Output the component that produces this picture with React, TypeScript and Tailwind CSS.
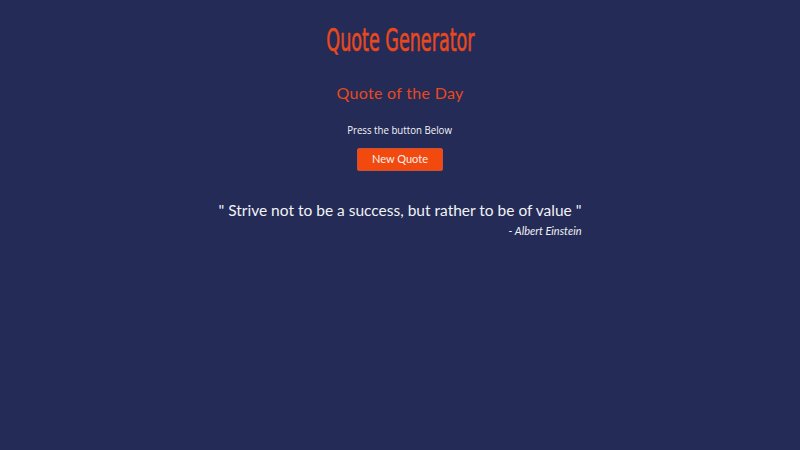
export default function App() {
  return (
    <div className="min-h-[450px] w-full bg-[#232b56] flex flex-col items-center pt-[20px] font-['Lato',sans-serif]">
      <h1 className="text-[#e8491d] text-[32px] leading-[40px] font-['DejaVu_Sans_Condensed','DejaVu_Sans',sans-serif] scale-x-[0.61] [-webkit-text-stroke:0.6px_#e8491d]">
        Quote Generator
      </h1>
      <h2 className="mt-[22px] text-[#e8491d] text-[16px] leading-[22px] tracking-[0.3px]">
        Quote of the Day
      </h2>
      <p className="mt-[18px] text-[#f4f4f8] text-[11px] leading-[16px] font-['Open_Sans',sans-serif] scale-x-[0.88]">
        Press the button Below
      </p>
      <button className="mt-[10px] h-[23px] w-[86px] rounded-[2px] bg-[#f2490f] text-[#f7f0ee] text-[11px] border border-[#c9533a]">
        New Quote
      </button>
      <div className="mt-[28px] flex flex-col items-end">
        <p className="text-[#f2f2f7] text-[15.5px] leading-[22px]">
          " Strive not to be a success, but rather to be of value "
        </p>
        <p className="mt-[2px] text-[#f0f0f5] text-[11px] italic leading-[16px]">
          - Albert Einstein
        </p>
      </div>
    </div>
  );
}
